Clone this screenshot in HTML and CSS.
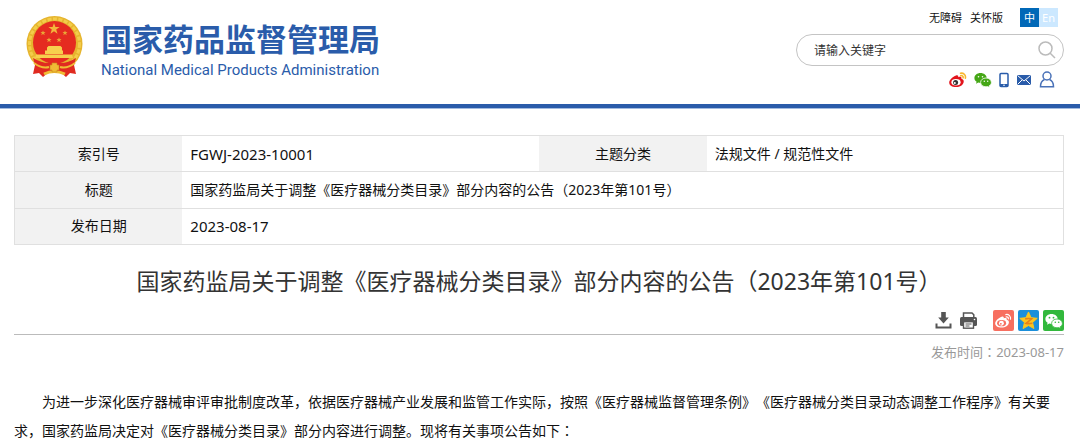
FILE: index.html
```html
<!DOCTYPE html>
<html lang="zh-CN">
<head>
    <meta charset="UTF-8">
    <meta name="viewport" content="width=device-width, initial-scale=1.0">
    <title>国家药监局关于调整《医疗器械分类目录》部分内容的公告</title>
    <link rel="stylesheet" href="styles.css">
</head>
<body>
    <header class="header">
        <a href="#" class="logo">
            <svg class="emblem" viewBox="0 0 60 64" aria-hidden="true">
                <circle cx="30.500" cy="29" r="28" fill="#e6b52e"/>
                <circle cx="30.500" cy="29" r="25" fill="none" stroke="#f3cd4a" stroke-width="3" stroke-dasharray="4 1.500"/>
                <circle cx="30.500" cy="27.500" r="21.500" fill="#e52b20"/>
                <path fill="#f3b73c" d="M30 8l1.400 4h4.200l-3.400 2.600 1.300 4.200-3.500-2.600-3.500 2.600 1.300-4.200-3.400-2.600h4.200z"/>
                <g fill="#e9a636">
                    <path id="star" d="M19 15.500l.7 1.600h1.800l-1.400 1.200.6 1.900-1.700-1.100-1.700 1.100.6-1.900-1.400-1.200h1.800z"/>
                    <use href="#star" x="22"/>
                    <use href="#star" x="6" y="7"/>
                    <use href="#star" x="16" y="7"/>
                </g>
                <path fill="#f7cf4d" d="M23 32.500l1.500-1.500h12l1.500 1.500v3H23zM21 35.500h18V39H21zM12 39.500h36l1 3.500H11z"/>
                <path d="M9 43q9 5 15 5h13q7 0 15-5l-2 7 2 9-6-1-4 4-7-6h-9l-7 6-4-4-6 1 2-9z" fill="#e02a20"/>
                <path d="M10 48q8 6 15 4M51 48q-8 6-15 4" fill="none" stroke="#efbd35" stroke-width="2"/>
                <path d="M20 59q10-5 21 0" fill="none" stroke="#efbd35" stroke-width="3"/>
                <path d="M26 50h2v-2h5v2h2v5h-2v2h-5v-2h-2z" fill="#f0bc35" stroke="#c98a1c" stroke-width=".6"/>
            </svg>
            <span class="logo-text">
                <span class="logo-cn">国家药品监督管理局</span>
                <span class="logo-en">National Medical Products Administration</span>
            </span>
        </a>

        <div class="tools">
            <div class="links">
                <a href="#">无障碍</a>
                <a href="#">关怀版</a>
                <div class="lang">
                    <a href="#" class="active">中</a>
                    <a href="#">En</a>
                </div>
            </div>
            <form class="search">
                <input type="text" placeholder="请输入关键字" aria-label="请输入关键字">
                <button type="button" aria-label="搜索">
                    <svg width="18" height="18" viewBox="0 0 18 18" fill="none" stroke="#bbb" stroke-width="1.500">
                        <circle cx="7.500" cy="7.500" r="6.500"/>
                        <path d="M12 12l5 5"/>
                    </svg>
                </button>
            </form>
            <div class="social">
                <a href="#" aria-label="微博">
                    <svg width="18" height="16" viewBox="0 0 18 16">
                        <path fill="#e2141c" d="M7 3.500c1.600-.7 2.700.2 2.200 1.700 2-.8 3.800-.4 3.200 1.500 1.700.5 2.600 1.600 2.300 3.200C14.200 13 11 15 7 15c-4 0-6.800-1.800-6.800-4.600C.2 8 3.800 4.600 7 3.500z"/>
                        <ellipse cx="7" cy="10.300" rx="4.600" ry="3.200" fill="#fff"/>
                        <circle cx="6.600" cy="10.500" r="2.500" fill="#333"/>
                        <circle cx="5.800" cy="11" r="1" fill="#fff"/>
                        <path d="M11.500 1.200c3-.6 5.500 1.800 4.900 4.900M11.800 3.600c1.500-.2 2.600.8 2.300 2.200" fill="none" stroke="#f8b62d" stroke-width="1.600" stroke-linecap="round"/>
                    </svg>
                </a>
                <a href="#" aria-label="微信">
                    <svg width="18" height="16" viewBox="0 0 18 16">
                        <path fill="#45a716" d="M6.500 1C3 1 .4 3.200.4 6c0 1.600.8 2.900 2.200 3.800L2 11.800l2.300-1.200c.7.200 1.400.3 2.200.3C10 10.900 12.700 8.700 12.700 6S10 1 6.500 1z"/>
                        <path fill="#45a716" stroke="#fff" stroke-width=".8" d="M12 6c-3 0-5.400 1.900-5.400 4.400S9 14.800 12 14.800c.6 0 1.200-.1 1.700-.2l2 1-.5-1.800c1.400-.8 2.200-2 2.200-3.400C17.400 7.900 15 6 12 6z"/>
                        <g fill="#fff"><circle cx="4.500" cy="4.700" r=".8"/><circle cx="8.500" cy="4.700" r=".8"/><circle cx="10.300" cy="9.300" r=".7"/><circle cx="13.700" cy="9.300" r=".7"/></g>
                    </svg>
                </a>
                <a href="#" aria-label="手机版">
                    <svg width="10" height="16" viewBox="0 0 10 16">
                        <rect x="1" y="1.500" width="8" height="13" rx="1" fill="none" stroke="#2a5caa" stroke-width="1.500"/>
                        <path d="M1 12h8v2.500H1z" fill="#2a5caa"/>
                        <circle cx="5" cy="13.200" r=".8" fill="#fff"/>
                    </svg>
                </a>
                <a href="#" aria-label="邮箱">
                    <svg width="16" height="16" viewBox="0 0 16 16">
                        <rect x="1" y="3" width="14" height="10" fill="#2a5caa"/>
                        <path d="M1.500 3.500L8 9l6.500-5.500M1.500 12.500L6 8M14.500 12.500L10 8" fill="none" stroke="#fff"/>
                    </svg>
                </a>
                <a href="#" aria-label="个人中心">
                    <svg width="16" height="17" viewBox="0 0 16 17" fill="none" stroke="#4a72b8" stroke-width="1.500">
                        <circle cx="8" cy="5" r="4"/>
                        <path d="M5.500 8.500C3 9.500 1.500 12 1.500 15.800h13c0-3.800-1.500-6.300-4-7.300"/>
                    </svg>
                </a>
            </div>
        </div>
    </header>

    <main class="content">
        <table class="info">
            <tbody>
                <tr>
                    <th scope="row">索引号</th>
                    <td class="code">FGWJ-2023-10001</td>
                    <th scope="row">主题分类</th>
                    <td>法规文件 / 规范性文件</td>
                </tr>
                <tr>
                    <th scope="row">标题</th>
                    <td colspan="3">国家药监局关于调整《医疗器械分类目录》部分内容的公告（2023年第101号）</td>
                </tr>
                <tr>
                    <th scope="row">发布日期</th>
                    <td class="code" colspan="3">2023-08-17</td>
                </tr>
            </tbody>
        </table>

        <h1>国家药监局关于调整《医疗器械分类目录》部分内容的公告（2023年第101号）</h1>

        <div class="actions">
            <button type="button" aria-label="下载">
                <svg width="17" height="17" viewBox="0 0 17 17" fill="#555">
                    <path d="M6.200 0h4.600v5.500h3L8.500 11.500 3.200 5.500h3z"/>
                    <path d="M.5 11.500h2v3h12v-3h2V16.500H.5z"/>
                </svg>
            </button>
            <button type="button" aria-label="打印">
                <svg width="17" height="17" viewBox="0 0 17 17">
                    <path d="M3.500 5V1h8.500l1.800 1.800V5" fill="#fff" stroke="#555" stroke-width="1.500"/>
                    <rect y="5" width="17" height="9" rx="1.500" fill="#555"/>
                    <rect x="3.500" y="9.700" width="10" height="6.500" fill="#fff" stroke="#555" stroke-width="1.400"/>
                    <path d="M5.500 12h6M5.500 14h4" stroke="#555"/>
                    <circle cx="14.500" cy="7.500" r=".8" fill="#fff"/>
                </svg>
            </button>
            <div class="share">
                <a href="#" class="weibo" aria-label="分享到微博">
                    <svg width="17" height="16" viewBox="0 0 18 16">
                        <path fill="#fff" d="M7 3.500c1.600-.7 2.700.2 2.200 1.700 2-.8 3.800-.4 3.200 1.500 1.700.5 2.600 1.600 2.300 3.200C14.200 13 11 15 7 15c-4 0-6.800-1.800-6.800-4.600C.2 8 3.800 4.600 7 3.500z"/>
                        <ellipse cx="7" cy="10.300" rx="4.800" ry="3.300" fill="#f76f60"/>
                        <circle cx="6.800" cy="10.400" r="2.600" fill="#fff"/>
                        <circle cx="6.200" cy="11" r="1" fill="#f76f60"/>
                        <path d="M11.500 1.200c3-.6 5.500 1.800 4.900 4.900M11.800 3.600c1.500-.2 2.600.8 2.300 2.200" fill="none" stroke="#fff" stroke-width="1.300" stroke-linecap="round"/>
                    </svg>
                </a>
                <a href="#" class="qzone" aria-label="分享到QQ空间">
                    <svg width="19" height="19" viewBox="0 0 20 20">
                        <path fill="#fdc51d" stroke="#fdc51d" stroke-linejoin="round" d="M10 1l2.700 6 6.500.7-4.900 4.400 1.400 6.400L10 15.300l-5.700 3.200 1.400-6.400L.8 7.700l6.500-.7z"/>
                        <path fill="none" stroke="#e8811a" stroke-width="1.700" d="M6.500 8.300c2.500-.5 4.500-.5 6.800-.1L7.500 13c2 .4 4.200.4 6.500-.1"/>
                    </svg>
                </a>
                <a href="#" class="wechat" aria-label="分享到微信">
                    <svg width="18" height="16" viewBox="0 0 18 16">
                        <path fill="#fff" d="M6.500 1C3 1 .4 3.200.4 6c0 1.600.8 2.900 2.200 3.800L2 11.800l2.300-1.200c.7.200 1.400.3 2.200.3C10 10.900 12.700 8.700 12.700 6S10 1 6.500 1z"/>
                        <path fill="#fff" stroke="#32b83c" stroke-width=".8" d="M12 6c-3 0-5.400 1.900-5.400 4.400S9 14.800 12 14.800c.6 0 1.200-.1 1.700-.2l2 1-.5-1.800c1.400-.8 2.200-2 2.200-3.400C17.400 7.900 15 6 12 6z"/>
                        <g fill="#32b83c"><circle cx="4.500" cy="4.700" r=".9"/><circle cx="8.500" cy="4.700" r=".9"/><circle cx="10.300" cy="9.300" r=".8"/><circle cx="13.700" cy="9.300" r=".8"/></g>
                    </svg>
                </a>
            </div>
        </div>

        <div class="time">发布时间<span class="colon" lang="zh-TW">：</span>2023-08-17</div>

        <article class="article">
            <p>为进一步深化医疗器械审评审批制度改革，依据医疗器械产业发展和监管工作实际，按照《医疗器械监督管理条例》《医疗器械分类目录动态调整工作程序》有关要求，国家药监局决定对《医疗器械分类目录》部分内容进行调整。现将有关事项公告如下<span class="colon" lang="zh-TW">：</span></p>
        </article>
    </main>
</body>
</html>
```
FILE: styles.css
```css
* {
    box-sizing: border-box;
}

body {
    margin: 0;
    background: #fff;
    color: #111;
    font-family: "Noto Sans", "Noto Sans CJK SC", sans-serif;
    font-size: 14px;
    text-spacing-trim: space-all;
}

a {
    color: inherit;
    text-decoration: none;
}

svg {
    display: block;
}

button {
    padding: 0;
    border: none;
    background: none;
    cursor: pointer;
}

/* 页头 */
.header {
    display: flex;
    justify-content: space-between;
    align-items: flex-start;
    height: 108px;
    padding: 8px 16px 0 24px;
    border-bottom: 4px solid #2a5caa;
    box-shadow: 0 1px 0 #a3bbdf;
}

.logo {
    display: flex;
    gap: 17px;
    padding-top: 7px;
    color: #2a5caa;
}

.emblem {
    width: 60px;
    height: 64px;
}

.logo-text {
    display: flex;
    flex-direction: column;
    padding-top: 5px;
}

.logo-cn {
    font-family: "Noto Sans CJK SC", sans-serif;
    font-size: 31px;
    font-weight: bold;
    line-height: 36px;
}

.logo-en {
    font-family: Roboto, sans-serif;
    font-size: 15px;
    line-height: 28px;
}

.tools {
    display: flex;
    flex-direction: column;
    align-items: flex-end;
    width: 268px;
}

.links {
    display: flex;
    align-items: center;
    gap: 8px;
    padding-right: 6px;
    font-size: 11px;
    line-height: 19px;
}

.lang {
    display: flex;
    margin-left: 9px;
    color: #fff;
    text-align: center;
}

.lang a {
    width: 19px;
    background: #cce8ff;
}

.lang .active {
    background: #0068b7;
}

.search {
    display: flex;
    align-items: center;
    width: 100%;
    height: 32px;
    margin-top: 7px;
    padding: 0 7px 0 17px;
    border: 1px solid #c4c4c4;
    border-radius: 16px;
}

.search input {
    flex: 1;
    min-width: 0;
    padding: 0;
    border: none;
    outline: none;
    background: none;
    font-family: inherit;
    font-size: 12px;
}

.search input::placeholder {
    color: #333;
}

.social {
    display: flex;
    align-items: center;
    gap: 7px;
    margin-top: 5px;
    padding-right: 9px;
}

/* 正文 */
.content {
    padding: 27px 16px 0 14px;
}

.info {
    width: 100%;
    height: 110px;
    border-collapse: collapse;
    table-layout: fixed;
}

.info th,
.info td {
    padding: 7px 8px;
    border: 1px solid #e0e0e0;
    border-width: 1px 0;
    line-height: 20px;
    text-align: left;
}

.info th {
    width: 16%;
    background: #f2f2f2;
    font-weight: normal;
    text-align: center;
}

.info tr th:first-child {
    border-left-width: 1px;
}

.info tr td:last-child {
    border-right-width: 1px;
}

.info .code {
    font-size: 15px;
}

h1 {
    margin: 18px 0 0;
    color: #333;
    font-size: 23px;
    font-weight: normal;
    line-height: 36px;
    text-align: center;
}

.actions {
    display: flex;
    justify-content: flex-end;
    align-items: center;
    gap: 8px;
    margin-top: 11px;
    padding-bottom: 3px;
    border-bottom: 1px solid #bbb;
}

.share {
    display: flex;
    gap: 4px;
    margin-left: 8px;
}

.share a {
    display: flex;
    justify-content: center;
    align-items: center;
    width: 21px;
    height: 21px;
    border-radius: 2px;
}

.weibo {
    background: #f76f60;
}

.qzone {
    background: #1b8fdb;
}

.wechat {
    background: #32b83c;
}

.time {
    margin-top: 8px;
    color: #999;
    font-size: 13px;
    line-height: 18px;
    text-align: right;
}

/* 冒号居中显示 */
.colon {
    font-family: "Noto Sans CJK TC", sans-serif;
}

.article {
    margin-top: 27px;
    line-height: 28px;
}

.article p {
    margin: 0;
    text-indent: 2em;
}
```
